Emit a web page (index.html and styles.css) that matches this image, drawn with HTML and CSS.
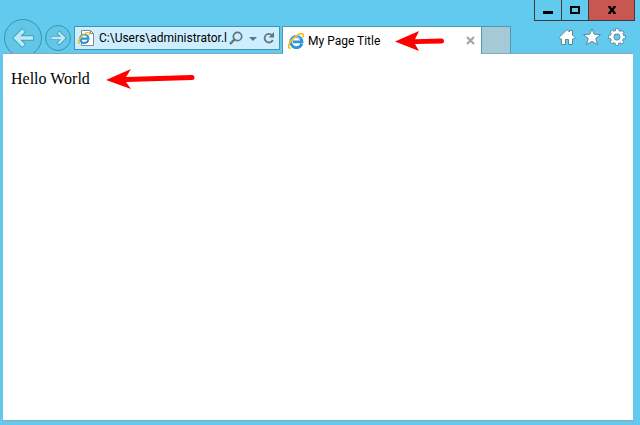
FILE: index.html
```html
<!DOCTYPE html>
<html lang="en">
<head>
<meta charset="utf-8">
<title>My Page Title</title>
<link rel="stylesheet" href="styles.css">
</head>
<body>
<svg class="defs" aria-hidden="true">
  <symbol id="ie" viewBox="0 0 16 16">
    <path d="M13.800 10.600A5.600 5.600 0 1 1 14 8.800H5" fill="none" stroke="#2c93dc" stroke-width="2.800"/>
    <path d="M3.500 8.200A4.800 4.800 0 0 1 12.200 6" fill="none" stroke="#7accf7" stroke-width="1.100"/>
    <path d="M2.600 15C-.6 15.600.1 11.600 3.700 7.100C7.500 2.400 13.200-.7 14.900 1.200C15.600 2 15.300 3.300 14.800 4.400" fill="none" stroke="#f6bd1c" stroke-width="1.700"/>
  </symbol>
</svg>
<div class="window">
  <header class="chrome">
    <div class="caption">
      <button class="cap minimize" aria-label="Minimize"><svg width="10" height="10"><path d="M0 6h10v3H0z"/></svg></button>
      <button class="cap maximize" aria-label="Maximize"><svg width="10" height="10"><path d="M1 2h8v6H1z" fill="none" stroke="#000" stroke-width="2"/></svg></button>
      <button class="cap close" aria-label="Close"><svg width="10" height="10"><path d="M1 1h2.500L5 3.500 6.500 1H9v1L6.500 5 9 8v1H6.500L5 6.500 3.500 9H1V8l2.500-3L1 2z"/></svg></button>
    </div>
    <nav class="toolbar">
      <button class="plain back" aria-label="Back">
        <svg width="38" height="35"><circle cx="19" cy="19" r="18.500" fill="#62c6e8" stroke="#3d92ab"/><path d="M10 19h20M20 11l-8 8 8 8" fill="none" stroke="#4a9fb7" stroke-width="5.600"/><path d="M11 19h18M19.500 11.500L12 19l7.500 7.500" fill="none" stroke="#bcebf8" stroke-width="3.600"/></svg>
      </button>
      <button class="plain forward" aria-label="Forward">
        <svg width="26" height="26"><circle cx="13" cy="13" r="12.500" fill="#62c6e8" stroke="#3d92ab"/><path d="M6 13h13M13 7l6 6-6 6" fill="none" stroke="#4a9fb7" stroke-width="4.200"/><path d="M6.500 13H19M13.500 7.500L19 13l-5.500 5.500" fill="none" stroke="#bcebf8" stroke-width="2.400"/></svg>
      </button>
      <div class="address">
        <svg class="page-icon" width="17" height="16"><path d="M3.500.5h9l3 3v12h-12z" fill="#fff" stroke="#858b8e"/><path d="M12.500.5v3h3" fill="none" stroke="#858b8e"/><use href="#ie" x="0" y="2" width="12" height="12"/></svg>
        <input class="url" type="text" aria-label="Address" value="C:\Users\administrator.l">
        <div class="address-tools">
          <button class="plain" aria-label="Search"><svg width="14" height="14"><circle cx="8.500" cy="5.500" r="4.200" fill="none" stroke="#60777f" stroke-width="1.700"/><path d="M5.500 8.500L1 13" stroke="#60777f" stroke-width="2.400"/></svg></button>
          <button class="plain" aria-label="Show address list"><svg width="8" height="14"><path d="M0 6h8L4 10z" fill="#60777f"/></svg></button>
          <button class="plain" aria-label="Refresh"><svg width="12" height="14"><path d="M9 4.200A4.300 4.300 0 1 0 9.800 9" fill="none" stroke="#60777f" stroke-width="1.800"/><path d="M11 1v5.500H5.500z" fill="#60777f"/></svg></button>
        </div>
      </div>
      <div class="tab">
        <svg width="16" height="16"><use href="#ie" width="16" height="16"/></svg>
        <span class="tab-title">My Page Title</span>
        <button class="plain" aria-label="Close tab"><svg width="9" height="9"><path d="M1 1l7 7M8 1L1 8" stroke="#a5a5a5" stroke-width="2.200"/></svg></button>
        <svg class="tab-pointer" width="49" height="20"><path d="M0 10.500L24 0l-4 8.200L46.500 7.500a2.500 2.500 0 0 1 0 5L20 13l4 7z" fill="#f00"/></svg>
      </div>
      <button class="new-tab" aria-label="New tab"></button>
      <div class="tools">
        <button class="plain" aria-label="Home"><svg width="18" height="18"><path d="M1 9.500L9 1.500l2.500 2.500V2.500h3V7l2.500 2.500-1 1.500H14.500v5.500h-4v-5h-3v5h-4V11h-1.500z" fill="#fff" stroke="#5e8796"/></svg></button>
        <button class="plain" aria-label="Favorites"><svg width="18" height="18"><path d="M9 .8l2.300 5.500 6.200.3-4.800 3.900 1.800 6.200L9 13.300l-5.500 3.400 1.800-6.200L.5 6.600l6.200-.3z" fill="#fff" stroke="#5e8796"/></svg></button>
        <button class="plain" aria-label="Tools"><svg width="18" height="18"><circle cx="9" cy="9" r="6.800" fill="none" stroke="#5e8796" stroke-width="3.800" stroke-dasharray="3.900 1.440" stroke-dashoffset="1.950"/><circle cx="9" cy="9" r="4.700" fill="none" stroke="#5e8796" stroke-width="4.200"/><circle cx="9" cy="9" r="6.800" fill="none" stroke="#fff" stroke-width="2.200" stroke-dasharray="2.500 2.840" stroke-dashoffset="1.250"/><circle cx="9" cy="9" r="4.800" fill="none" stroke="#fff" stroke-width="2.800"/></svg></button>
      </div>
    </nav>
  </header>
  <main class="page">
    <p class="hello">Hello World<svg class="hello-pointer" width="90" height="22"><path d="M0 11L25 0l-5 8L86 6a2.500 2.500 0 0 1 0 5L20 13l5 7z" fill="#f00"/></svg></p>
  </main>
</div>
</body>
</html>
```
FILE: styles.css
```css
* { box-sizing: border-box; }

body {
  margin: 0;
  background: #62caee;
}

svg { display: block; }

.defs {
  position: absolute;
  width: 0;
  height: 0;
}

.window {
  display: flex;
  flex-direction: column;
  min-height: 100vh;
  padding: 0 7px 5px 3px;
  font: 12px Roboto, "Open Sans", sans-serif;
  color: #000;
}

.chrome {
  display: grid;
  height: 54px;
}

.chrome > * { grid-area: 1 / 1; }

.caption {
  display: flex;
  align-self: start;
  justify-self: end;
  z-index: 1;
  margin-right: -2px;
  height: 21px;
  border: 1px solid #3c3c3c;
  border-top: 0;
}

.cap {
  display: flex;
  align-items: center;
  justify-content: center;
  width: 27px;
  padding: 0;
  border: 0;
  border-right: 1px solid #3c3c3c;
  background: none;
}

.cap.close {
  width: 45px;
  border: 0;
  background: #c75750;
}

.toolbar {
  display: flex;
  align-items: flex-end;
  min-width: 0;
  border-bottom: 1px solid #86a9bb;
}

.plain {
  flex: none;
  padding: 0;
  border: 0;
  background: none;
}

.back {
  height: 34px;
  margin-left: 1px;
  overflow: hidden;
}

.forward { margin: 0 3px 2px; }

.address {
  display: flex;
  align-items: center;
  width: 206px;
  height: 24px;
  margin-bottom: 3px;
  padding: 0 4px 0 3px;
  border: 1px solid #3f95b1;
  background: #cdeeff;
}

.page-icon {
  flex: none;
  margin-right: 4px;
}

.url {
  flex: 1;
  min-width: 0;
  padding: 0;
  border: 0;
  outline: 0;
  background: none;
  font: inherit;
  color: inherit;
}

.address-tools {
  display: flex;
  gap: 6px;
}

.tab {
  position: relative;
  display: flex;
  align-items: center;
  gap: 4px;
  width: 200px;
  height: 28px;
  margin: 0 0 -1px 2px;
  padding: 0 6px 0 5px;
  border: 1px solid #4c9bb3;
  border-bottom: 0;
  background: #fff;
}

.tab-title { flex: 1; }

.tab-pointer {
  position: absolute;
  left: 112px;
  top: 4px;
}

.new-tab {
  width: 30px;
  height: 27px;
  margin-left: -1px;
  padding: 0;
  border: 1px solid #4c9bb3;
  border-bottom: 0;
  background: #a5cad6;
}

.tools {
  display: flex;
  gap: 7px;
  margin: 0 7px 7px auto;
}

.page {
  flex: 1;
  padding: 16px 8px;
  background: #fff;
  box-shadow: 0 1px 1px #86a9bb;
  font: 16px "Liberation Serif", serif;
}

.hello {
  position: relative;
  margin: 0;
}

.hello-pointer {
  position: absolute;
  left: 95px;
  top: -1px;
}
```
